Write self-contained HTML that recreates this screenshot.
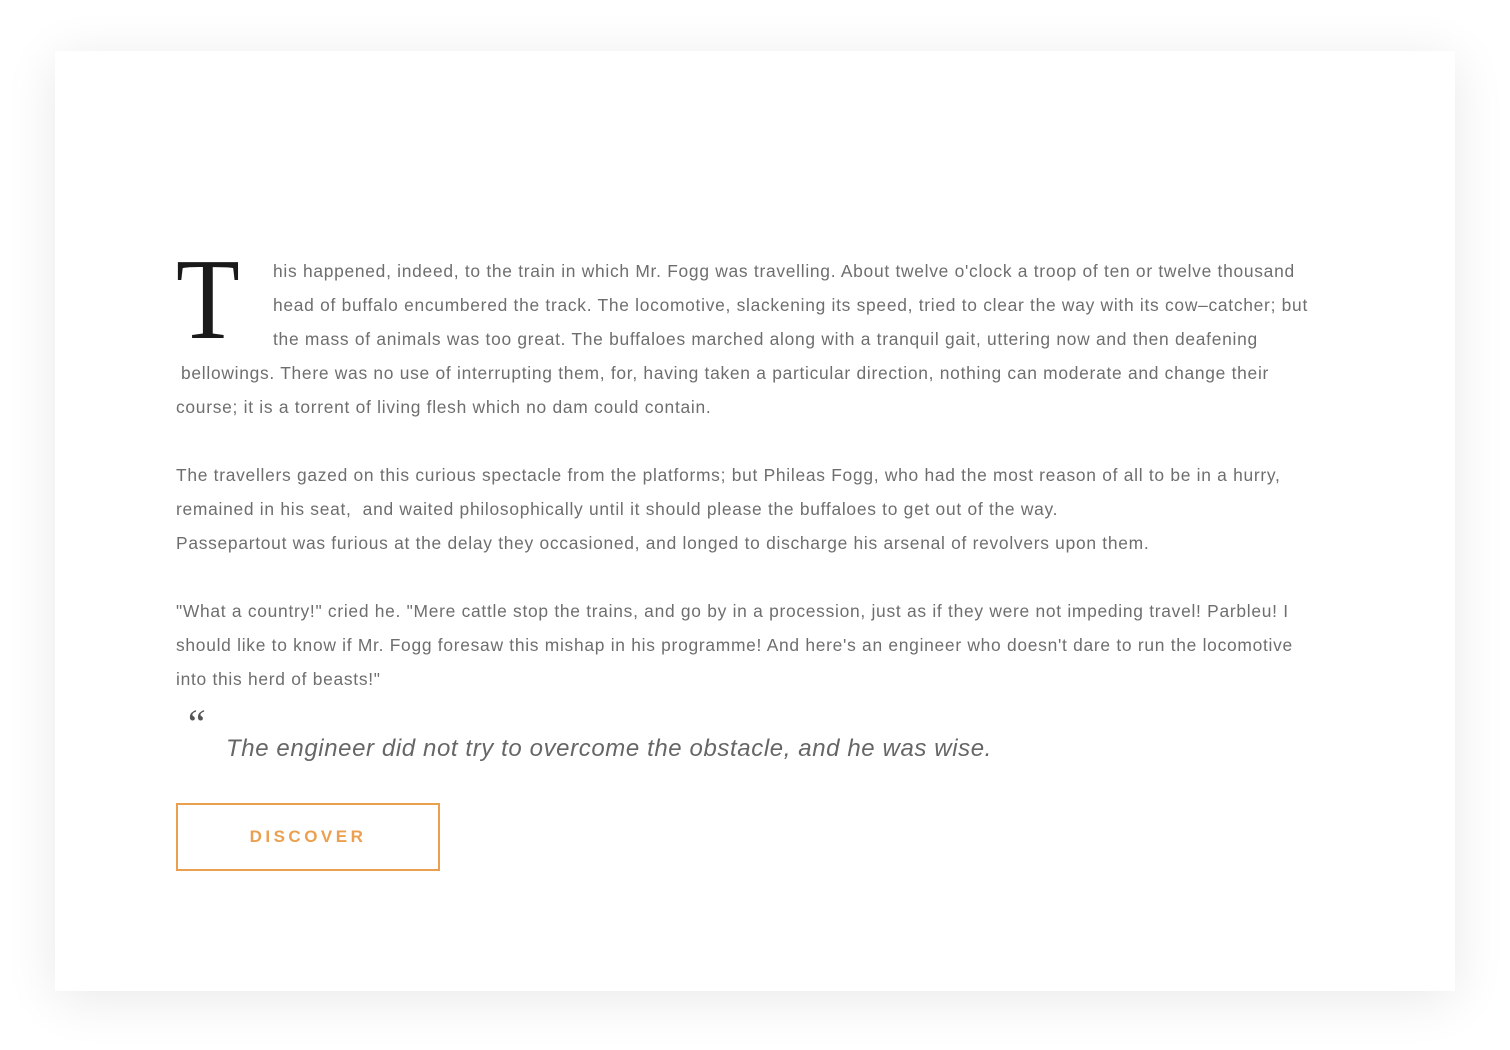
<!DOCTYPE html>
<html><head><meta charset="utf-8"><style>
body{margin:0;width:1510px;height:1050px;background:#fff;position:relative;overflow:hidden;font-family:"Liberation Sans",sans-serif}
.card{position:absolute;left:55px;top:51px;width:1400px;height:940px;background:#fff;box-shadow:0 8px 50px rgba(0,0,0,0.09)}
.l{position:absolute;white-space:nowrap;font-size:17.4px;letter-spacing:0.72px;color:#6e6e6e;line-height:20px;font-weight:300}
.T{position:absolute;left:176px;top:225px;font-family:"Liberation Serif",serif;font-size:116px;line-height:150px;color:#1a1a1a;transform:scaleX(0.9);transform-origin:left top}
.q{position:absolute;left:226px;top:735px;font-size:24px;letter-spacing:0.6px;font-style:italic;color:#666;white-space:nowrap}
.qm{position:absolute;left:184px;top:704px;font-family:"Liberation Serif",serif;font-style:italic;font-size:40px;color:#555;line-height:40px}
.btn{position:absolute;left:176px;top:803px;width:260px;height:64px;border:2px solid #eba050;color:#eba050;font-weight:bold;font-size:17px;letter-spacing:3.5px;text-align:center;line-height:64px}
</style></head><body>
<div class="card"></div>
<div class="T">T</div>
<div class="l" style="left:273px;top:261px">his happened, indeed, to the train in which Mr. Fogg was travelling. About twelve o'clock a troop of ten or twelve thousand</div>
<div class="l" style="left:273px;top:295px">head of buffalo encumbered the track. The locomotive, slackening its speed, tried to clear the way with its cow–catcher; but</div>
<div class="l" style="left:273px;top:329px">the mass of animals was too great. The buffaloes marched along with a tranquil gait, uttering now and then deafening</div>
<div class="l" style="left:181px;top:363px">bellowings. There was no use of interrupting them, for, having taken a particular direction, nothing can moderate and change their</div>
<div class="l" style="left:176px;top:397px">course; it is a torrent of living flesh which no dam could contain.</div>
<div class="l" style="left:176px;top:465px">The travellers gazed on this curious spectacle from the platforms; but Phileas Fogg, who had the most reason of all to be in a hurry,</div>
<div class="l" style="left:176px;top:499px">remained in his seat,&nbsp; and waited philosophically until it should please the buffaloes to get out of the way.</div>
<div class="l" style="left:176px;top:533px">Passepartout was furious at the delay they occasioned, and longed to discharge his arsenal of revolvers upon them.</div>
<div class="l" style="left:176px;top:601px">"What a country!" cried he. "Mere cattle stop the trains, and go by in a procession, just as if they were not impeding travel! Parbleu! I</div>
<div class="l" style="left:176px;top:635px">should like to know if Mr. Fogg foresaw this mishap in his programme! And here's an engineer who doesn't dare to run the locomotive</div>
<div class="l" style="left:176px;top:669px">into this herd of beasts!"</div>
<div class="qm">“</div>
<div class="q">The engineer did not try to overcome the obstacle, and he was wise.</div>
<div class="btn">DISCOVER</div>
</body></html>
